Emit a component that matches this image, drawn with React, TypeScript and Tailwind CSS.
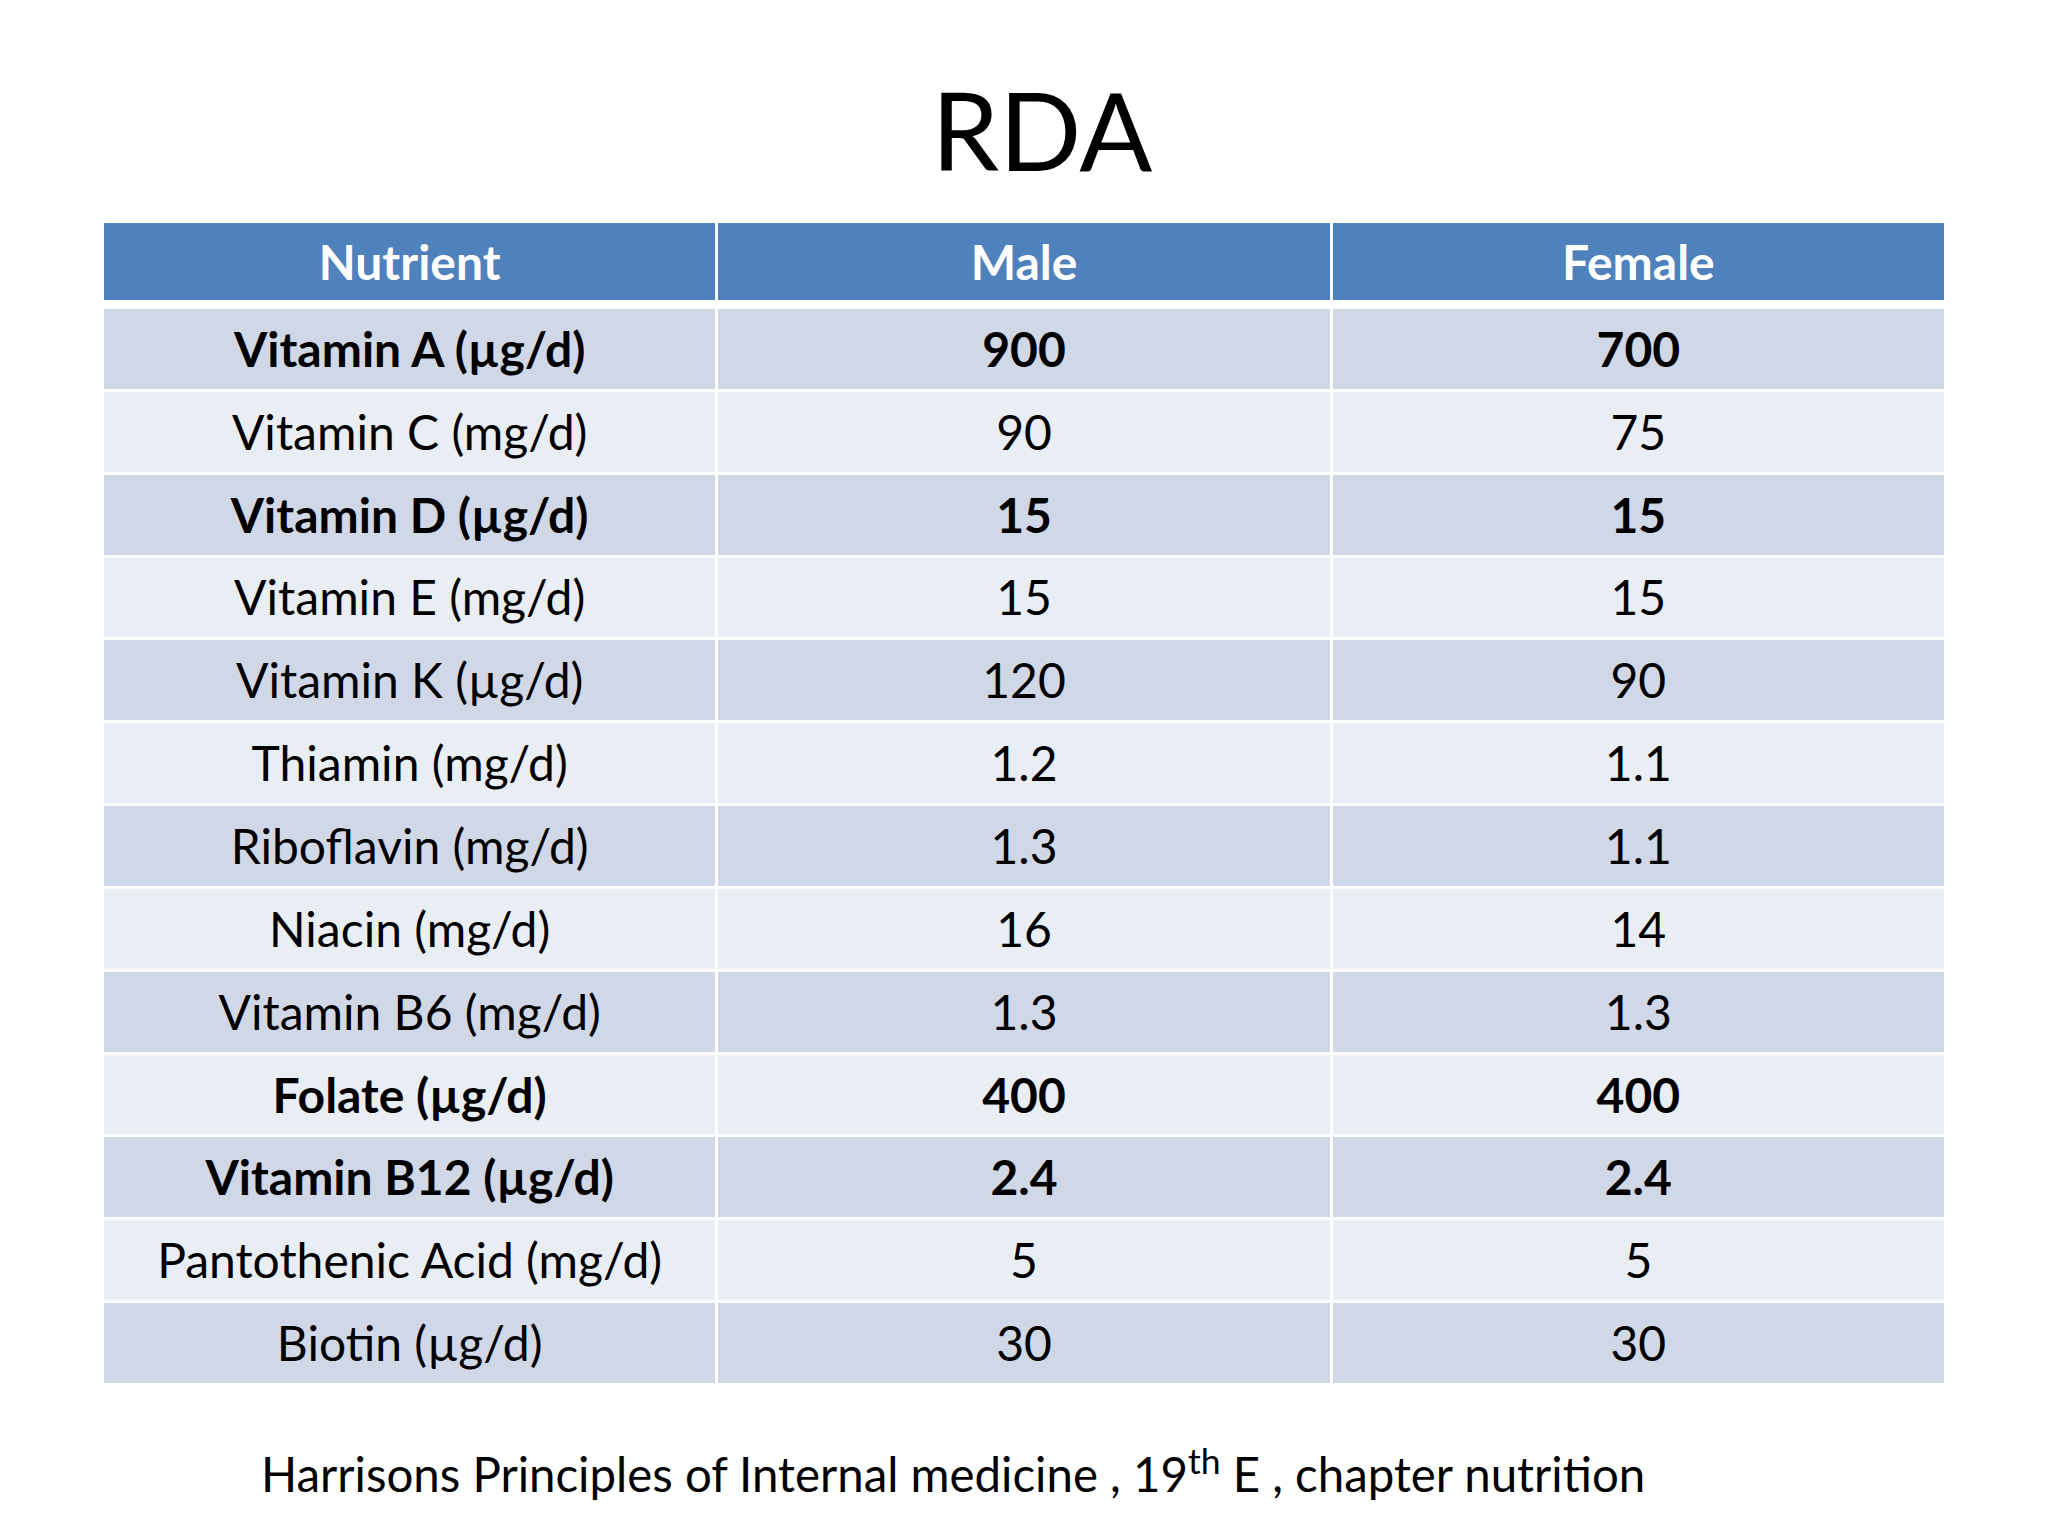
import React from "react";

type Row = { n: string; m: string; f: string; b?: boolean };

const rows: Row[] = [
  { n: "Vitamin A (µg/d)", m: "900", f: "700", b: true },
  { n: "Vitamin C (mg/d)", m: "90", f: "75" },
  { n: "Vitamin D (µg/d)", m: "15", f: "15", b: true },
  { n: "Vitamin E (mg/d)", m: "15", f: "15" },
  { n: "Vitamin K (µg/d)", m: "120", f: "90" },
  { n: "Thiamin (mg/d)", m: "1.2", f: "1.1" },
  { n: "Riboflavin (mg/d)", m: "1.3", f: "1.1" },
  { n: "Niacin (mg/d)", m: "16", f: "14" },
  { n: "Vitamin B6 (mg/d)", m: "1.3", f: "1.3" },
  { n: "Folate (µg/d)", m: "400", f: "400", b: true },
  { n: "Vitamin B12 (µg/d)", m: "2.4", f: "2.4", b: true },
  { n: "Pantothenic Acid (mg/d)", m: "5", f: "5" },
  { n: "Biotin (µg/d)", m: "30", f: "30" },
];

function Cell({ text, bold, dark }: { text: string; bold?: boolean; dark: boolean }) {
  return (
    <div
      className={
        "flex items-center justify-center text-[48px] leading-none text-black " +
        (bold ? "font-bold " : "font-normal ") +
        (dark ? "bg-[#d0d8e8]" : "bg-[#e9edf4]")
      }
    >
      {text}
    </div>
  );
}

export default function App() {
  return (
    <div className="w-[2048px] h-[1536px] bg-white flex flex-col font-['Lato',sans-serif] text-black">
      <div className="pt-[75px] pl-[36px] h-[184px] text-center text-[108px] leading-none font-normal">
        RDA
      </div>
      <div className="mx-[104px] mt-[39px] flex flex-col">
        <div className="grid grid-cols-3 gap-x-[3px] h-[77px]">
          {["Nutrient", "Male", "Female"].map((h) => (
            <div
              key={h}
              className="bg-[#4f81bd] flex items-center justify-center text-white font-bold text-[48px] leading-none"
            >
              {h}
            </div>
          ))}
        </div>
        <div className="mt-[9px] grid grid-cols-3 grid-rows-13 gap-[3px] h-[1074px]">
          {rows.map((r, i) => (
            <React.Fragment key={r.n}>
              <Cell text={r.n} bold={r.b} dark={i % 2 === 0} />
              <Cell text={r.m} bold={r.b} dark={i % 2 === 0} />
              <Cell text={r.f} bold={r.b} dark={i % 2 === 0} />
            </React.Fragment>
          ))}
        </div>
      </div>
      <div className="mt-[67px] pl-[261px] text-[47.4px] leading-none">
        Harrisons Principles of Internal medicine , 19<sup>th</sup> E , chapter nutrition
      </div>
    </div>
  );
}
